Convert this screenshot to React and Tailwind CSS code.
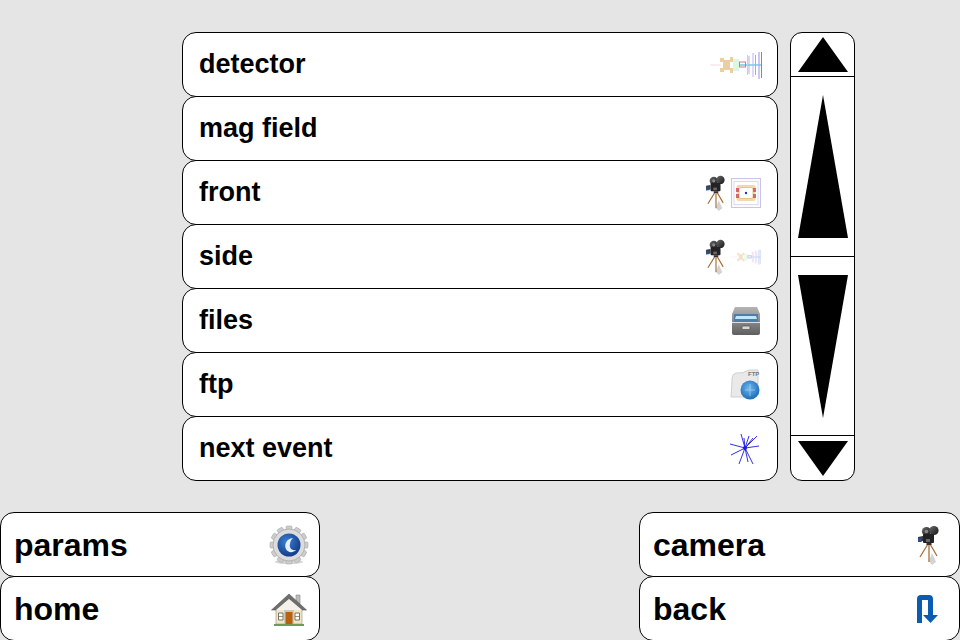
import React from 'react';

// tripod camera, drawn in a 24x40 box
function CameraIcon({ className }) {
  return (
    <svg viewBox="0 0 24 40" className={className}>
      <defs>
        <linearGradient id="camBody" x1="0" y1="0" x2="1" y2="1">
          <stop offset="0" stopColor="#6b6b6b" />
          <stop offset="1" stopColor="#151515" />
        </linearGradient>
      </defs>
      <path d="M12 36 L15 28 L19 37 L15 40 Z" fill="#b5b5b5" opacity="0.6" />
      <circle cx="9.5" cy="6.5" r="4.6" fill="url(#camBody)" />
      <circle cx="17" cy="5.5" r="4.6" fill="url(#camBody)" />
      <circle cx="9.5" cy="6.5" r="1.8" fill="#888" />
      <rect x="6" y="9" width="11" height="9" rx="1" fill="#222" />
      <path d="M6 11 L1 12 L1 17 L6 16 Z" fill="#3a3a3a" />
      <rect x="1" y="13" width="3.5" height="4" fill="#2f4f7f" />
      <rect x="9" y="14" width="4" height="3" fill="#667" />
      <path d="M11 19 L3 32 M12 19 L12 37 M13 19 L20 31" stroke="#a8703a" strokeWidth="1.3" fill="none" />
      <rect x="9.5" y="18" width="5" height="2" fill="#333" />
    </svg>
  );
}

function DetectorSideIcon({ className, faint }) {
  const o = faint ? 0.6 : 1;
  return (
    <svg viewBox="0 0 54 32" className={className}>
      <g opacity={o}>
        <path d="M1 16 H12" stroke="#f8d8e8" strokeWidth="1" />
        <path d="M11 9 H15 V11 H21 V8 H24 V13 H21 V19 H24 V24 H21 V21 H15 V23 H11 V19 H14 V13 H11 Z" fill="#eccf9f" />
        <path d="M25 10 V22 M27 10 V22 M29 10 V22" stroke="#b9f0c4" strokeWidth="1" />
        <path d="M30 16 H53" stroke="#62c8ee" strokeWidth="1.4" />
        <rect x="30.5" y="13" width="6" height="5" fill="none" stroke="#cc7a86" strokeWidth="1" />
        <path d="M38.5 6 V26" stroke="#f2b9dd" strokeWidth="1" />
        <path d="M40 7 V25" stroke="#b9a7ee" strokeWidth="1" />
        <path d="M46.5 6 V26" stroke="#a9a5ea" strokeWidth="1" />
        <path d="M50 3 V30" stroke="#a9a5ea" strokeWidth="1.2" />
        <path d="M52.5 3 V29" stroke="#7f7fe0" strokeWidth="1" />
        <path d="M44 4 V28" stroke="#b9b5f0" strokeWidth="1" />
      </g>
    </svg>
  );
}

function DetectorFrontIcon({ className }) {
  return (
    <svg viewBox="0 0 30 30" className={className}>
      <rect x="0.5" y="0.5" width="29" height="29" fill="#fbfaff" stroke="#c7c5ea" />
      <rect x="3" y="3.5" width="24" height="23" fill="#fff" stroke="#dcdaf2" />
      <rect x="5.5" y="7" width="19" height="16" rx="2" fill="#f0d9ae" />
      <rect x="8" y="9.5" width="14" height="11" rx="2" fill="#fff" stroke="#e2c48d" />
      <path d="M5 10 H8 V14 H5 Z M22 10 H25 V14 H22 Z M5 16 H8 V20 H5 Z M22 16 H25 V20 H22 Z" fill="#d9646c" />
      <circle cx="15" cy="15" r="1.2" fill="#2436b8" />
    </svg>
  );
}

function FilesIcon({ className }) {
  return (
    <svg viewBox="0 0 30 30" className={className}>
      <defs>
        <linearGradient id="cabinet" x1="0" y1="0" x2="0" y2="1">
          <stop offset="0" stopColor="#b5b5b5" />
          <stop offset="1" stopColor="#5e5e5e" />
        </linearGradient>
      </defs>
      <path d="M4 1 H26 L29 8 V27 Q29 29 27 29 H3 Q1 29 1 27 V8 Z" fill="url(#cabinet)" />
      <rect x="3" y="8" width="24" height="8" fill="#4d7ea8" />
      <path d="M5 10 H25 L26 13 H4 Z" fill="#bfe6fb" />
      <rect x="1" y="16" width="28" height="1" fill="#dedede" />
      <rect x="11" y="20" width="8" height="3.5" rx="1" fill="#d6d6d6" stroke="#444" strokeWidth="0.6" />
    </svg>
  );
}

function FtpIcon({ className }) {
  return (
    <svg viewBox="0 0 32 32" className={className}>
      <defs>
        <radialGradient id="globe" cx="0.45" cy="0.4" r="0.7">
          <stop offset="0" stopColor="#6db8ef" />
          <stop offset="1" stopColor="#0f5fae" />
        </radialGradient>
      </defs>
      <path d="M7 4 Q14 5 20 1 H29 V18 H24 V28 H2 Q3 14 3 10 Q3 5 7 4 Z" fill="#e9e9e9" stroke="#cfcfcf" />
      <text x="19" y="7" fontSize="6" fontWeight="700" fill="#777" fontFamily="'Liberation Sans', sans-serif">FTP</text>
      <circle cx="21" cy="21" r="9.5" fill="url(#globe)" />
      <path d="M21 15 V27 M16 21 H26" stroke="#a8d6f6" strokeWidth="0.7" />
    </svg>
  );
}

function EventIcon({ className }) {
  return (
    <svg viewBox="0 0 32 32" className={className} stroke="#1a1ae6" strokeWidth="0.9" fill="none">
      <path d="M16 15 L1 11 M16 15 L2 22 M16 15 L12 1 M16 15 L15 5 M16 15 L20 3 M16 15 L28 3 M16 15 L24 5 M16 15 L30 13 M16 15 L24 31 M16 15 L19 29 M16 15 L10 31" />
      <circle cx="16" cy="15" r="2" fill="#1a1ae6" stroke="none" />
    </svg>
  );
}

function ParamsIcon({ className }) {
  const teeth = [0, 30, 60, 90, 120, 150, 180, 210, 240, 270, 300, 330];
  return (
    <svg viewBox="0 0 40 40" className={className}>
      <defs>
        <radialGradient id="swirl" cx="0.4" cy="0.35" r="0.8">
          <stop offset="0" stopColor="#3c7fd0" />
          <stop offset="1" stopColor="#0a2f7c" />
        </radialGradient>
      </defs>
      <ellipse cx="20" cy="37" rx="14" ry="2" fill="#d5d5d5" />
      {teeth.map((a) => (
        <rect key={a} x="17" y="1" width="6" height="7" rx="1" fill="#cdcdcd" stroke="#a9a9a9" strokeWidth="0.6" transform={`rotate(${a} 20 20)`} />
      ))}
      <circle cx="20" cy="20" r="16" fill="#dcdcdc" stroke="#b3b3b3" />
      <circle cx="20" cy="20" r="11.5" fill="url(#swirl)" />
      <path d="M24 13 C17 14 15 20 17 24 C19 28 24 28 27 25 C22 26 20 22 21 19 C21 16 23 14 24 13 Z" fill="#e6f0fa" />
    </svg>
  );
}

function HomeIcon({ className }) {
  return (
    <svg viewBox="0 0 36 36" className={className}>
      <path d="M25 4 H29 V13 H25 Z" fill="#bdbdbd" stroke="#888" strokeWidth="0.6" />
      <rect x="5" y="16" width="26" height="17" fill="#f0e6c8" stroke="#a39a82" strokeWidth="0.7" />
      <path d="M0.5 19 L18 3 L35.5 19 L31 19 L18 8 L5 19 Z" fill="#6e6e6e" stroke="#555" strokeWidth="0.6" />
      <path d="M18 8 L31 19 H5 Z" fill="#f4f1ea" />
      <rect x="13" y="19" width="10" height="14" fill="#c8c8c0" />
      <rect x="14.5" y="21" width="7" height="12" fill="#b9600e" />
      <path d="M7.5 22 H12 V29 H7.5 Z M24 22 H28.5 V29 H24 Z" fill="#fff" stroke="#6e6650" strokeWidth="0.9" />
      <path d="M7.5 25.5 H12 M24 25.5 H28.5" stroke="#6e6650" strokeWidth="0.7" />
      <rect x="3" y="33" width="30" height="2" fill="#6f9a52" />
    </svg>
  );
}

function BackIcon({ className }) {
  return (
    <svg viewBox="0 0 28 32" className={className}>
      <path d="M3 30 V6 Q3 2 7 2 H15 Q19 2 19 6 V22 H24 L16.5 30 L9 22 H14 V7 H8 V30 Z" fill="#0a5cb0" />
    </svg>
  );
}

function Row({ label, big, className, children }) {
  return (
    <div className={`flex items-center justify-between bg-white border border-black rounded-[14px] h-[65px] ${big ? 'pl-[13px] pr-[10px] text-[32px]' : 'pl-[16px] pr-[16px] text-[27px]'} ${className || ''}`}>
      <span className="font-bold text-black leading-none">{label}</span>
      <div className="flex items-center gap-[4px]">{children}</div>
    </div>
  );
}

export default function App() {
  return (
    <div className="w-[960px] h-[640px] overflow-hidden bg-[#e5e5e5] flex flex-col font-['Liberation_Sans',Arial,sans-serif]">
      {/* list + scroller */}
      <div className="flex pt-[32px] pl-[182px] gap-[12px]">
        <div className="w-[596px] flex flex-col">
          <Row label="detector"><DetectorSideIcon className="w-[54px] h-[32px] -mr-[2px]" /></Row>
          <Row label="mag field" className="-mt-px" />
          <Row label="front" className="-mt-px">
            <CameraIcon className="w-[22px] h-[36px]" />
            <DetectorFrontIcon className="w-[30px] h-[30px]" />
          </Row>
          <Row label="side" className="-mt-px">
            <CameraIcon className="w-[22px] h-[36px]" />
            <DetectorSideIcon className="w-[30px] h-[30px]" faint />
          </Row>
          <Row label="files" className="-mt-px"><FilesIcon className="w-[30px] h-[30px]" /></Row>
          <Row label="ftp" className="-mt-px"><FtpIcon className="w-[32px] h-[32px]" /></Row>
          <Row label="next event" className="-mt-px"><EventIcon className="w-[32px] h-[32px]" /></Row>
        </div>

        <div className="w-[65px] h-[449px] bg-white border border-black rounded-[12px] flex flex-col overflow-hidden">
          <div className="h-[44px] flex items-center justify-center border-b border-black">
            <svg viewBox="0 0 50 35" className="w-[50px] h-[35px]"><path d="M25 0 L50 35 H0 Z" fill="black" /></svg>
          </div>
          <div className="h-[180px] flex items-center justify-center border-b border-black">
            <svg viewBox="0 0 50 143" className="w-[50px] h-[143px]"><path d="M25 0 L50 143 H0 Z" fill="black" /></svg>
          </div>
          <div className="h-[179px] flex items-center justify-center border-b border-black">
            <svg viewBox="0 0 50 143" className="w-[50px] h-[143px]"><path d="M0 0 H50 L25 143 Z" fill="black" /></svg>
          </div>
          <div className="flex-1 flex items-center justify-center">
            <svg viewBox="0 0 50 35" className="w-[50px] h-[35px]"><path d="M0 0 H50 L25 35 Z" fill="black" /></svg>
          </div>
        </div>
      </div>

      {/* bottom buttons */}
      <div className="flex justify-between mt-[31px]">
        <div className="w-[320px] flex flex-col">
          <Row label="params" big><ParamsIcon className="w-[40px] h-[40px]" /></Row>
          <Row label="home" big className="-mt-px"><HomeIcon className="w-[36px] h-[36px] mr-[2px]" /></Row>
        </div>
        <div className="w-[321px] flex flex-col">
          <Row label="camera" big><CameraIcon className="w-[24px] h-[40px] mr-[8px]" /></Row>
          <Row label="back" big className="-mt-px"><BackIcon className="w-[28px] h-[32px] mr-[7px]" /></Row>
        </div>
      </div>
    </div>
  );
}
